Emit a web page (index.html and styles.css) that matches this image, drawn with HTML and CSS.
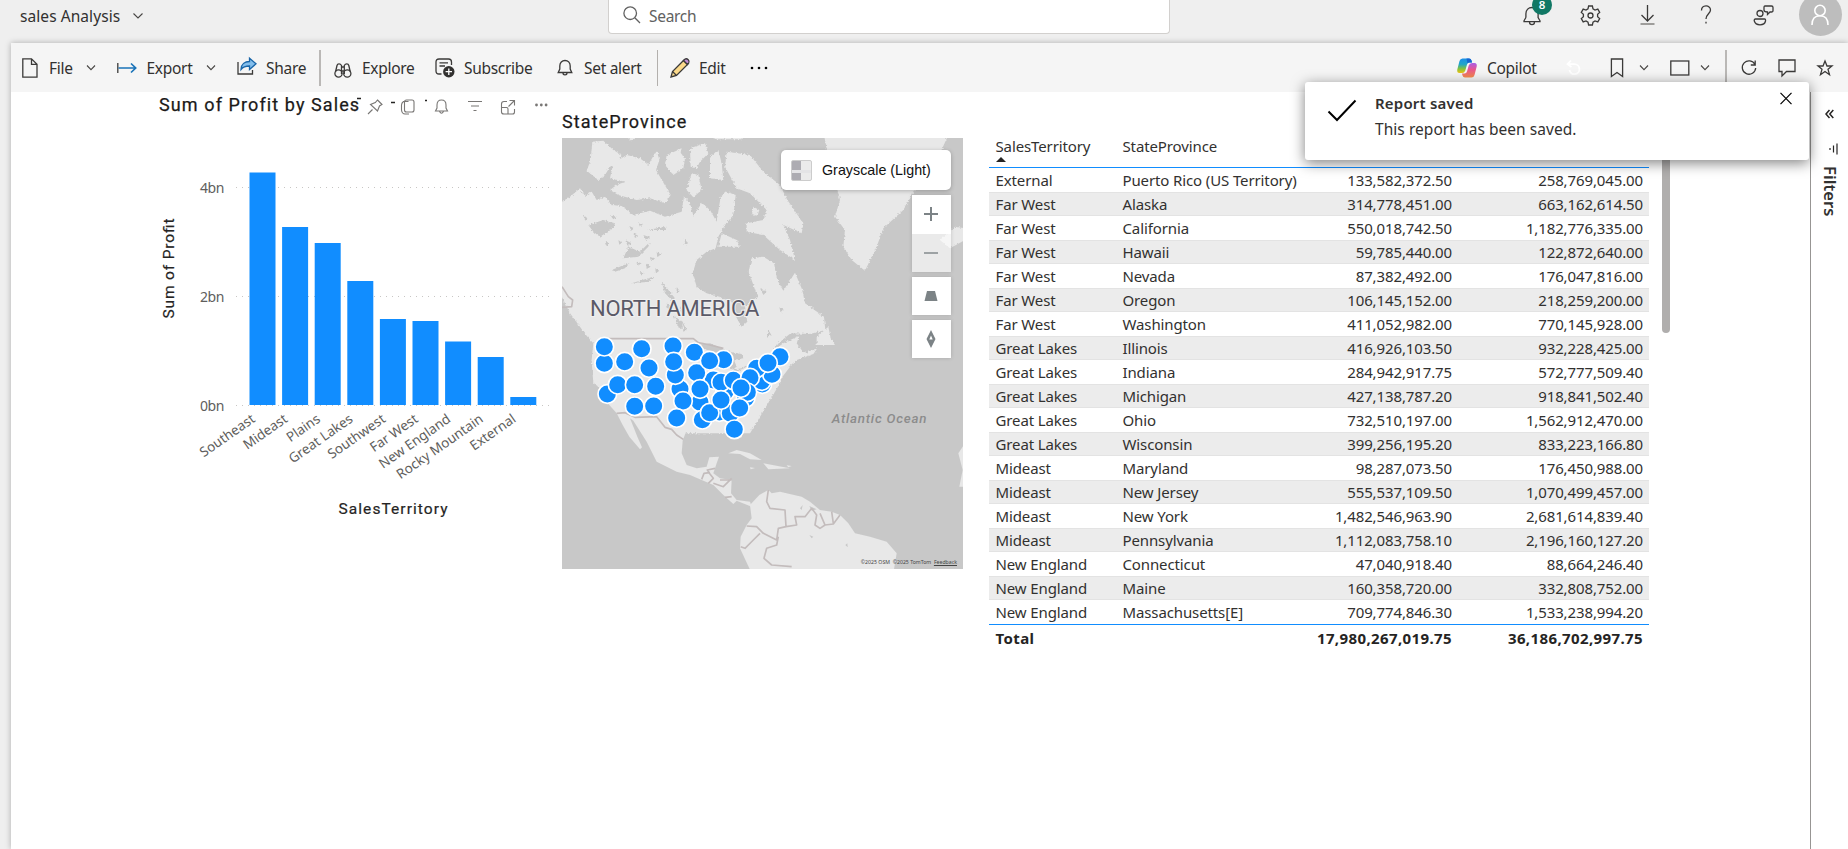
FILE: index.html
```
<!DOCTYPE html>
<html lang="en">
<head>
<meta charset="utf-8">
<title>sales Analysis</title>
<link rel="stylesheet" href="styles.css">
</head>
<body>
<header class="topbar">
  <span class="doc-name">sales Analysis</span>
  <svg class="chev" width="10" height="6" viewBox="0 0 10 6"><path d="M.5 .5 5 5 9.500 .5"/></svg>
  <div class="search">
    <svg class="line" width="18" height="18" viewBox="0 0 18 18"><circle cx="7.200" cy="7.200" r="6.300"/><path d="M11.800 11.800 17 17"/></svg>
    <span>Search</span>
  </div>
  <span></span>
  <div class="bell-wrap">
    <svg class="line" width="20" height="22" viewBox="0 0 20 22"><path d="M3.900 13.500V9.800C3.900 6 6.500 3.500 10 3.500S16.100 6 16.100 9.800V13.500L18 16.800V17.700H2V16.800L3.900 13.500M7.500 18C7.500 21.500 12.500 21.500 12.500 18"/></svg>
    <b class="badge">8</b>
  </div>
  <svg class="line" width="21" height="21" viewBox="0 0 21 21"><path d="M8.600 1H12.400L13 3.800 15 5 17.800 4.100 19.700 7.400 17.600 9.300V11.700L19.700 13.600 17.800 16.900 15 16 13 17.200 12.400 20H8.600L8 17.200 6 16 3.200 16.900 1.300 13.600 3.400 11.700V9.300L1.300 7.400 3.200 4.100 6 5 8 3.800Z"/><circle cx="10.500" cy="10.500" r="2.500"/></svg>
  <svg class="line" width="15" height="20" viewBox="0 0 15 20"><path d="M7.500 0V16M1.500 10 7.500 16 13.500 10"/><path class="soft" d="M.5 19H14.500"/></svg>
  <svg class="line" width="12" height="20" viewBox="0 0 12 20"><path d="M1.500 5.500C1.500 -.5 10.500 -.5 10.500 5 10.500 8.500 6 9.300 6 14"/><path d="M6 16.800V18.600"/></svg>
  <svg class="line" width="21" height="21" viewBox="0 0 21 21"><circle cx="7" cy="8.500" r="3"/><path d="M2.500 14H11.500C12.500 14 12.700 15 12.500 16 12 18.500 10 19.800 7 19.800S2 18.500 1.300 16C1 15 1.500 14 2.500 14ZM12 1H18.500Q20 1 20 2.500V5.500Q20 7 18.500 7H17L14.500 9.500V7Q11 7 11 5V2.500Q11 1 12 1Z"/></svg>
  <div class="avatar"><svg width="20" height="22" viewBox="0 0 20 22"><circle cx="10" cy="6.500" r="5.200"/><path d="M2 21C2 14 6 11.800 10 11.800S18 14 18 21"/></svg></div>
</header>

<main class="sheet">
  <nav class="toolbar">
    <svg class="line" width="16" height="20" viewBox="0 0 16 20"><path d="M.8 .8H9.500L15 6.300V19.200H.8ZM9.500 .8V6.300H15"/></svg>
    <span>File</span>
    <svg class="chev" width="10" height="6" viewBox="0 0 10 6"><path d="M1 .5 5 4.700 9 .5"/></svg>
    <svg class="line" width="20" height="12" viewBox="0 0 20 12"><path d="M.8 1V11"/><path class="blue" d="M1.500 6H18.500M14 1.500 18.700 6 14 10.500"/></svg>
    <span>Export</span>
    <svg class="chev" width="10" height="6" viewBox="0 0 10 6"><path d="M1 .5 5 4.700 9 .5"/></svg>
    <svg class="line up" width="20" height="18" viewBox="0 0 20 18"><path d="M1 5V17H15.500V13"/><path class="arrow" d="M4 12.500C4 7 8 4.500 12.500 4.500V1.200L19 6.800 12.500 12.500V9C9 9 6 9.800 4 12.500Z"/></svg>
    <span>Share</span>
    <i class="sep thick"></i>
    <svg class="line down" width="18" height="16" viewBox="0 0 18 16"><circle cx="4.500" cy="11.500" r="3.600"/><circle cx="13.300" cy="11.500" r="3.600"/><path d="M1.500 10 3 3.500Q3.400 1.800 5 1.800T7.500 3.500V12M16.300 10 14.800 3.500Q14.400 1.800 12.800 1.800T10.300 3.500V12M7.500 5H10.300M7.500 9H10.300"/></svg>
    <span>Explore</span>
    <svg class="line" width="20" height="20" viewBox="0 0 20 20"><path d="M6.500 16H4Q1 16 1 13V4Q1 1 4 1H13.500Q16.500 1 16.500 4V7M4.500 4.800H13M4.500 8H10"/><circle class="solid" cx="13.800" cy="13.700" r="5.700"/><path class="plus" d="M13.800 10.500V16.900M10.600 13.700H17"/></svg>
    <span>Subscribe</span>
    <svg class="line" width="16" height="18" viewBox="0 0 16 18"><path d="M2.800 10V7C2.800 3.500 5 1.500 8 1.500S13.200 3.500 13.200 7V10L14.800 13.500H1.200ZM6 14C6 16.500 10 16.500 10 14"/></svg>
    <span>Set alert</span>
    <i class="sep"></i>
    <svg class="line" width="20" height="20" viewBox="0 0 20 20"><path class="pencil" d="M1 19 2.500 13.500 13.500 2.500 17.500 6.500 6.500 17.500Z"/><path class="rubber" d="M13.500 2.500 14.800 1.300Q16.500 0 18.200 1.800T18.700 5.200L17.500 6.500Z"/><path d="M2.500 13.500 6.500 17.500"/></svg>
    <span>Edit</span>
    <svg width="18" height="4" viewBox="0 0 18 4"><circle cx="2" cy="2" r="1.300"/><circle cx="9" cy="2" r="1.300"/><circle cx="16" cy="2" r="1.300"/></svg>
    <svg width="20" height="20" viewBox="0 0 20 20">
      <defs>
        <linearGradient id="ca" x1="0" y1="0" x2="0" y2="1"><stop offset="0" stop-color="#1a8fe8"/><stop offset=".4" stop-color="#1fa5c9"/><stop offset=".7" stop-color="#7fc241"/><stop offset="1" stop-color="#f0c310"/></linearGradient>
        <linearGradient id="cb" x1="0" y1="0" x2="0" y2="1"><stop offset="0" stop-color="#a85ee8"/><stop offset=".45" stop-color="#e8558f"/><stop offset="1" stop-color="#f78b4a"/></linearGradient>
      </defs>
      <path fill="url(#ca)" d="M5.500 .5H12Q14 .5 14.500 2.500L15 4.500H12.500Q10.500 4.500 10 6.500L8.300 12.500Q7.500 15 5 15H2.500Q-.3 15 .3 11.500L2.500 3Q3.200 .5 5.500 .5Z"/>
      <path fill="#1664d0" d="M9.500 .5H12Q14 .5 14.500 2.500L15 4.500H12.500Q11 4.500 10.500 5.500Z"/>
      <path fill="url(#cb)" d="M14.500 19.500H8Q6 19.500 5.500 17.500L5 15.500H7.500Q9.500 15.500 10 13.500L11.700 7.500Q12.500 5 15 5H17.500Q20.300 5 19.700 8.500L17.500 17Q16.800 19.500 14.500 19.500Z"/>
    </svg>
    <span>Copilot</span>
    <svg class="undo" width="16" height="16" viewBox="0 0 16 16"><path d="M5 .5 1.500 4.200 5.500 7M1.500 4.200H8.500A5 5 0 1 1 3.500 10"/></svg>
    <svg class="line" width="14" height="20" viewBox="0 0 14 20"><path d="M1.400 1H12.600V18.500L7 14.500 1.400 18.500Z"/></svg>
    <svg class="chev" width="10" height="6" viewBox="0 0 10 6"><path d="M1 .5 5 4.700 9 .5"/></svg>
    <svg class="line" width="20" height="16" viewBox="0 0 20 16"><rect x=".8" y="1" width="18" height="14"/></svg>
    <svg class="chev" width="10" height="6" viewBox="0 0 10 6"><path d="M1 .5 5 4.700 9 .5"/></svg>
    <i class="sep thick"></i>
    <svg class="line" width="16" height="16" viewBox="0 0 16 16"><path d="M14 4.500A6.700 6.700 0 1 0 14.700 8M14.200 .5V5H9.800"/></svg>
    <svg class="line" width="18" height="18" viewBox="0 0 18 18"><path d="M1 1H17V12.500H8.500L4 17V12.500H1Z"/></svg>
    <svg class="line" width="16" height="16" viewBox="0 0 16 16"><path d="M8 1 10 6H15L11 9.300 12.500 14.700 8 11.500 3.500 14.700 5 9.300 1 6H6Z"/></svg>
  </nav>

  <div class="content">
    <section class="chart">
      <div class="chart-head">
        <h2>Sum of Profit by Sales</h2>
        <svg width="190" height="20" viewBox="0 0 190 20">
          <path class="frag" d="M0 3.500H4M34 7.500H38M68 5.500H70"/>
          <g class="tools">
            <path transform="translate(5 0)" d="M6 19 10.500 14.500M15.500 5 20 9.500 17.500 11 15.500 16 8.500 9.500 13.300 7.500Z"/>
            <path d="M51.500 6.500H46.500Q44.500 8 44.500 10V15Q45 19 48 19H52M49.500 5H55Q57 5 57 7V15Q57 17 55 17H49.500Q47.500 17 47.500 15V7Q47.500 5 49.500 5Z"/>
            <path d="M80 13V10Q80 5 84.500 5T89 10V13L90.500 16H78.500ZM82.500 16.500Q84.500 20 86.500 16.500"/>
            <path d="M111 6.500H125M114 11H122M116.500 15.500H119.500"/>
            <path d="M150 6.500H147Q144.500 6.500 144.500 9V17Q144.500 19 147 19H155.500Q157.500 19 157.500 17V14M152.500 5.500H157.500V10.500M157 6 151.500 11.500M144.500 12.500H149.500Q151 12.500 151 14V19"/>
          </g>
          <g class="tool-dots"><circle cx="179.500" cy="10" r="1.400"/><circle cx="184.300" cy="10" r="1.400"/><circle cx="189.100" cy="10" r="1.400"/></g>
        </svg>
      </div>
      <svg class="plot" width="403" height="400" viewBox="159 125 403 400">
        <g class="grid"><path d="M236 187.500H550M236 296.500H550M236 405.500H550"/></g>
        <g class="ticks">
          <text x="200" y="192.500" textLength="24.500">4bn</text>
          <text x="200" y="301.500" textLength="24.500">2bn</text>
          <text x="200" y="410.500" textLength="24.500">0bn</text>
        </g>
        <g class="bars">
          <rect x="249.500" y="172.500" width="26" height="232.500"/>
          <rect x="282.100" y="227" width="26" height="178"/>
          <rect x="314.700" y="243" width="26" height="162"/>
          <rect x="347.300" y="281" width="26" height="124"/>
          <rect x="379.900" y="319" width="26" height="86"/>
          <rect x="412.500" y="321" width="26" height="84"/>
          <rect x="445.100" y="341.500" width="26" height="63.500"/>
          <rect x="477.700" y="357" width="26" height="48"/>
          <rect x="510.300" y="397" width="26" height="8"/>
        </g>
        <g class="cats">
          <text transform="translate(256 421) rotate(-35)">Southeast</text>
          <text transform="translate(288.600 421) rotate(-35)">Mideast</text>
          <text transform="translate(321.200 421) rotate(-35)">Plains</text>
          <text transform="translate(353.800 421) rotate(-35)">Great Lakes</text>
          <text transform="translate(386.400 421) rotate(-35)">Southwest</text>
          <text transform="translate(419 421) rotate(-35)">Far West</text>
          <text transform="translate(451.600 421) rotate(-35)">New England</text>
          <text transform="translate(484.200 421) rotate(-35)">Rocky Mountain</text>
          <text transform="translate(516.800 421) rotate(-35)">External</text>
        </g>
        <g class="axis">
          <text x="338.500" y="514" textLength="109">SalesTerritory</text>
          <text transform="translate(174 318.500) rotate(-90)" textLength="100">Sum of Profit</text>
        </g>
      </svg>
    </section>

    <section class="map-card">
      <h2>StateProvince</h2>
      <div class="map">
        <svg width="401" height="431" viewBox="36 114 1203 1293">
          <defs><filter id="coast" x="-5%" y="-5%" width="110%" height="110%"><feTurbulence type="fractalNoise" baseFrequency=".16" numOctaves="3" seed="4"/><feDisplacementMap in="SourceGraphic" scale="10" xChannelSelector="R" yChannelSelector="G"/></filter>
          <filter id="coast-soft" x="-5%" y="-5%" width="110%" height="110%"><feTurbulence type="fractalNoise" baseFrequency=".15" numOctaves="2" seed="9"/><feDisplacementMap in="SourceGraphic" scale="4" xChannelSelector="R" yChannelSelector="G"/></filter></defs>
          <g class="land" filter="url(#coast)">
            <path d="M20 315 60 290 90 265 105 288 125 275 140 300 165 290 185 315 215 318 250 345 300 332 345 350 395 335 402 290 420 310 430 350 455 308 480 330 500 365 512 290 530 275 557 285 550 345 525 375 505 410 497 445 470 455 440 480 428 520 440 560 470 580 510 592 545 605 552 640 575 680 592 665 585 620 622 590 612 560 596 515 605 475 640 470 672 490 682 540 700 572 735 518 757 570 765 610 822 650 826 690 780 702 722 700 690 725 665 755 700 730 748 707 740 730 762 760 802 745 790 762 740 780 720 797 700 812 690 850 600 1000 360 1000 130 850 125 780 130 730 108 705 60 640 20 560Z"/>
            <path d="M127 125 160 122 190 150 215 165 205 190 180 200 165 225 145 240 110 212 122 180Z"/>
            <path d="M190 190 230 165 270 175 295 195 320 150 328 180 318 210 362 285 345 310 300 295 260 300 205 285 180 270 200 255 225 245 180 235Z"/>
            <path d="M350 165 385 150 405 175 400 205 370 225 345 195Z"/>
            <path d="M420 145 465 130 475 160 450 185 440 205 422 200Z"/>
            <path d="M425 220 445 225 455 270 430 292 410 270Z"/>
            <path d="M480 170 505 150 515 190 520 240 480 235Z"/>
            <path d="M530 155 600 165 640 215 690 255 712 300 760 370 755 400 700 375 720 420 735 480 690 450 640 405 590 395 590 370 640 360 650 330 600 280 560 265 525 200Z"/>
            <path d="M610 320 628 330 622 348 606 342Z"/>
            <path d="M515 400 560 420 570 440 505 440Z"/>
            <path d="M470 108H575V118H500ZM380 150 395 145 390 165ZM230 110H262L245 124Z"/>
            <path d="M822 105 1195 105 1170 160 1120 200 1100 260 1060 330 1000 385 980 440 945 512 905 480 880 440 885 390 855 350 870 300 860 260 835 170Z"/>
            <path d="M1170 420 1215 380 1245 385V420L1200 445Z"/>
            <path d="M800 712 835 680 842 715 855 735 800 735Z"/>
          </g>
          <g class="water" filter="url(#coast)">
            <path d="M115 375 160 360 195 370 190 385 150 410 130 395ZM180 345 200 350 190 358ZM235 440 270 455 300 425 295 440 265 470 220 475ZM185 510 235 490 225 505 195 515ZM290 390 350 380 345 390ZM245 550 310 530 300 545ZM335 545 355 570 375 595 365 600 345 580ZM370 645 385 680 405 690 395 665ZM395 660 410 690 400 695ZM575 640 590 660 580 678 565 660ZM630 565 650 575 640 585ZM98 343 112 355 106 362ZM250 400 266 408 255 414ZM320 455 334 462 322 472ZM288 488 302 500 290 507ZM655 690 664 705 650 710ZM238 378 252 385 244 392ZM390 622 402 635 395 642ZM688 622 702 630 692 638Z"/>
            <path d="M225 420 245 430 235 440ZM300 470 315 475 305 485ZM205 420 216 428 208 434ZM265 368 280 372 270 380ZM315 505 328 512 318 520ZM350 610 364 622 354 628ZM405 415 414 430 404 436ZM165 425 180 430 170 438ZM270 515 284 520 272 527ZM380 560 390 575 380 580ZM280 405 300 412 288 420ZM260 485 275 490 262 498Z"/>
            <path d="M440 735 480 730 505 740 540 755 575 762 580 775 552 780 560 800 545 810 530 785 505 775 480 752 455 745Z"/>
            <path d="M545 810 575 805 600 790 590 800 560 815Z"/>
          </g>
          <g class="land" filter="url(#coast-soft)">
            <path d="M125 780 132 820 160 895 200 940 218 975 238 1010 270 1048 276 1042 262 1010 240 955 250 962 290 1025 305 1055 320 1085 380 1115 420 1125 455 1140 490 1155 520 1185 550 1212 560 1202 605 1220 600 1205 560 1200 543 1180 545 1140 510 1135 490 1120 500 1090 507 1070 478 1072 470 1100 440 1105 410 1095 395 1060 398 1022 410 990 455 985 480 965 530 965 545 990 560 1018 575 1012 580 980 575 955 600 930 640 890 660 870 690 840 720 800 600 820 540 870 300 830 150 760Z"/>
            <path d="M600 1215 628 1185 655 1170 665 1180 690 1175 755 1190 780 1205 810 1230 845 1235 870 1245 895 1270 915 1300 960 1310 1010 1325 1040 1360 1030 1420 605 1420 570 1345 572 1310 590 1275 605 1255Z"/>
            <path d="M535 1060 560 1050 600 1060 635 1080 600 1078 570 1062ZM640 1090 695 1100 720 1105 655 1108ZM600 1102 615 1104 602 1108ZM710 1096 725 1098 715 1102Z"/>
            <path d="M1225 1060 1245 1030V1160H1228L1238 1110Z"/>
          </g>
          <g class="water"><path d="M750 1225 758 1215 755 1230ZM778 1305 790 1310 785 1315ZM886 1335 892 1330 893 1342ZM778 1218 800 1228 785 1232Z"/></g>
          <g class="borders">
            <path d="M165 716H430L445 728 480 735 520 745M36 560 55 590 68 600 65 620 36 622M200 940 225 938 255 952 320 950 345 982 365 988 380 1005 400 1018M455 1138 462 1120 478 1118 472 1110 495 1105M478 1120 490 1135 475 1150M510 1140 545 1140M490 1150 520 1160 545 1135M525 1192 545 1190"/>
            <path d="M655 1170 650 1205 660 1225 705 1230 708 1280 685 1285 680 1320 640 1300 620 1280 590 1278M630 1300 610 1320 585 1345 572 1340M708 1280 740 1275 735 1250 765 1250 785 1225M785 1225 800 1245 795 1275 810 1285 825 1275 850 1272 870 1245M810 1240 825 1275M845 1235 850 1270M685 1310 680 1335 650 1345 642 1375 665 1395 725 1400"/>
          </g>
          <g class="labels">
            <text class="continent" x="120" y="647" textLength="508">NORTH AMERICA</text>
            <text class="ocean" x="845" y="968" textLength="284">Atlantic Ocean</text>
          </g>
          <g class="dots" transform="translate(0 630)">
            <circle cx="163" cy="160" r="28"/><circle cx="163" cy="110" r="28"/><circle cx="224" cy="155" r="28"/><circle cx="275" cy="116" r="28"/><circle cx="297" cy="174" r="28"/><circle cx="172" cy="252" r="28"/><circle cx="203" cy="224" r="28"/><circle cx="317" cy="229" r="28"/><circle cx="254" cy="224" r="28"/><circle cx="254" cy="289" r="28"/><circle cx="311" cy="288" r="28"/><circle cx="369" cy="108" r="28"/><circle cx="390" cy="237" r="28"/><circle cx="376" cy="195" r="28"/><circle cx="371" cy="155" r="28"/><circle cx="433" cy="127" r="28"/><circle cx="490" cy="210" r="28"/><circle cx="440" cy="188" r="28"/><circle cx="450" cy="277" r="28"/><circle cx="399" cy="273" r="28"/><circle cx="380" cy="324" r="28"/><circle cx="457" cy="329" r="28"/><circle cx="450" cy="237" r="28"/><circle cx="521" cy="149" r="28"/><circle cx="479" cy="152" r="28"/><circle cx="525" cy="245" r="28"/><circle cx="513" cy="217" r="28"/><circle cx="637" cy="222" r="28"/><circle cx="635" cy="213" r="28"/><circle cx="690" cy="140" r="28"/><circle cx="666" cy="193" r="28"/><circle cx="620" cy="175" r="28"/><circle cx="654" cy="159" r="28"/><circle cx="550" cy="211" r="28"/><circle cx="600" cy="203" r="28"/><circle cx="587" cy="264" r="28"/><circle cx="592" cy="247" r="28"/><circle cx="573" cy="234" r="28"/><circle cx="508" cy="306" r="28"/><circle cx="479" cy="308" r="28"/><circle cx="541" cy="310" r="28"/><circle cx="569" cy="294" r="28"/><circle cx="513" cy="270" r="28"/><circle cx="553" cy="358" r="28"/>
          </g>
        </svg>
        <div class="style-btn"><i class="swatch"></i><span>Grayscale (Light)</span></div>
        <div class="map-ctl">
          <div class="zoomers">
            <b><svg width="14" height="14" viewBox="0 0 14 14"><path d="M0 6H6V0H8V6H14V8H8V14H6V8H0Z"/></svg></b>
            <b class="off"><svg width="14" height="14" viewBox="0 0 14 14"><path d="M0 6H14V8H0Z"/></svg></b>
          </div>
          <b><svg width="14" height="14" viewBox="0 0 14 14"><path d="M3 2H11L13.500 12H.5Z"/></svg></b>
          <b><svg width="14" height="18" viewBox="0 0 14 18"><path fill-rule="evenodd" d="M7 0 11.500 9 7 18 2.500 9ZM7 5.500 5.300 9.500H8.700Z"/></svg></b>
        </div>
        <div class="credit">©2025 OSM&nbsp; ©2025 TomTom&nbsp; <u>Feedback</u></div>
      </div>
    </section>

    <section class="table-card">
      <div class="tr th"><span>SalesTerritory<i class="tri"></i></span><span>StateProvince</span></div>
      <div class="rows" id="rows"></div>
      <div class="tr total"><span>Total</span><span></span><span class="n">17,980,267,019.75</span><span class="n">36,186,702,997.75</span></div>
    </section>
    <div class="scroll"></div>

    <aside class="filters">
      <svg width="9" height="10" viewBox="0 0 9 10"><path d="M4.500 1 1 5 4.500 9M8.300 1 4.800 5 8.300 9"/></svg>
      <svg class="bars-ico" width="9" height="12" viewBox="0 0 9 12"><path d="M1 5V7M4.500 2.500V9.500M8 .5V11.500"/></svg>
      <span>Filters</span>
    </aside>
  </div>
</main>

<div class="toast">
  <svg width="30" height="23" viewBox="0 0 30 23"><path d="M1.500 12.500 10 21 28.500 1.500"/></svg>
  <div><strong>Report saved</strong><p>This report has been saved.</p></div>
  <svg class="x" width="12" height="13" viewBox="0 0 12 13"><path d="M.5 .8 11.500 12.200M11.500 .8 .5 12.200"/></svg>
</div>
<script src="rows.js"></script>
</body>
</html>
```
FILE: rows.js
```
const data = [
  ["External", "Puerto Rico (US Territory)", "133,582,372.50", "258,769,045.00"],
  ["Far West", "Alaska", "314,778,451.00", "663,162,614.50"],
  ["Far West", "California", "550,018,742.50", "1,182,776,335.00"],
  ["Far West", "Hawaii", "59,785,440.00", "122,872,640.00"],
  ["Far West", "Nevada", "87,382,492.00", "176,047,816.00"],
  ["Far West", "Oregon", "106,145,152.00", "218,259,200.00"],
  ["Far West", "Washington", "411,052,982.00", "770,145,928.00"],
  ["Great Lakes", "Illinois", "416,926,103.50", "932,228,425.00"],
  ["Great Lakes", "Indiana", "284,942,917.75", "572,777,509.40"],
  ["Great Lakes", "Michigan", "427,138,787.20", "918,841,502.40"],
  ["Great Lakes", "Ohio", "732,510,197.00", "1,562,912,470.00"],
  ["Great Lakes", "Wisconsin", "399,256,195.20", "833,223,166.80"],
  ["Mideast", "Maryland", "98,287,073.50", "176,450,988.00"],
  ["Mideast", "New Jersey", "555,537,109.50", "1,070,499,457.00"],
  ["Mideast", "New York", "1,482,546,963.90", "2,681,614,839.40"],
  ["Mideast", "Pennsylvania", "1,112,083,758.10", "2,196,160,127.20"],
  ["New England", "Connecticut", "47,040,918.40", "88,664,246.40"],
  ["New England", "Maine", "160,358,720.00", "332,808,752.00"],
  ["New England", "Massachusetts[E]", "709,774,846.30", "1,533,238,994.20"]
];
document.getElementById("rows").innerHTML = data.map(r =>
  `<div class="tr"><span>${r[0]}</span><span>${r[1]}</span><span class="n">${r[2]}</span><span class="n">${r[3]}</span></div>`
).join("");
```
FILE: styles.css
```
* { box-sizing: border-box; }
body {
  margin: 0; width: 1848px; height: 849px; overflow: hidden; position: relative;
  background: #efefef; color: #323130;
  font: 15px/20px "Noto Sans", "Open Sans", sans-serif;
}
svg { display: block; overflow: visible; }
h2, p { margin: 0; }

.line { fill: none; stroke: #3b3a39; stroke-width: 1.3; }
.line .soft { stroke: #8a8886; stroke-width: 1.6; }
.line .blue { stroke: #1a73b8; stroke-width: 1.7; }
.line .arrow { fill: #83beec; stroke: #1a66a8; }
.line .solid { fill: #323130; stroke: none; }
.line .plus { stroke: #fff; }
.line .pencil { fill: #fbd98a; }
.line .rubber { fill: #c38cd4; }
.chev { fill: none; stroke: #484644; stroke-width: 1.1; }

.topbar {
  display: grid; height: 43px; padding-left: 20px; align-items: center;
  grid-template-columns: 113px 475px 562px 352px 58px 60px 60px 53px 45.500px 43px;
  grid-template-rows: 29px;
}
.doc-name { font-size: 15.500px; letter-spacing: .07px; white-space: nowrap; padding-top: 2px; }
.topbar > .chev { margin-top: 2px; }
.topbar > svg.line { margin-top: 1px; }
.search {
  display: flex; align-items: center; gap: 8px; height: 34px; padding: 1px 0 5px 14px; align-self: start;
  background: #fff; border: 1px solid #d2d0ce; border-top: 0; border-radius: 0 0 4px 4px;
  color: #616161; font-size: 15.500px; letter-spacing: -.3px;
}
.search svg { stroke: #616161; }
.search span { margin-top: 2px; }
.bell-wrap { position: relative; }
.badge {
  position: absolute; left: 10px; top: -9px; width: 20px; height: 20px; border-radius: 50%;
  background: #117865; color: #fff; font-size: 11.500px; line-height: 19px; text-align: center; font-weight: 600;
}
.avatar {
  width: 43px; height: 43px; border-radius: 50%; background: #bdbdbd;
  display: flex; align-items: center; justify-content: center;
}
.avatar svg { fill: none; stroke: #fff; stroke-width: 1.6; }

.sheet {
  margin-left: 11px; height: 806px; background: #fff;
  box-shadow: 0 0 6px rgba(0, 0, 0, .28);
}
.toolbar {
  display: grid; height: 49px; padding-left: 11px; align-items: center; background: #f5f5f5;
  grid-template-columns: 27px 37px 31px 29.5px 59.5px 31px 29px 53px 15px 28px 73px 29px 93px 27px 73px 13px 29px 51px 707px 30px 79px 44px 28.5px 31px 30.5px 25px 15.5px 37.5px 39px 16px;
  font-size: 15.500px; letter-spacing: -.3px; white-space: nowrap;
}
.up { margin-top: -4px; }
.down { margin-top: 4px; }
.sep { width: 1px; height: 36px; background: #b3b0ad; }
.sep.thick { width: 2px; background: #bab8b6; }
.undo { fill: none; stroke: #fff; stroke-width: 1.8; }

.content { display: flex; height: 757px; padding-left: 148px; }

h2 { font: 400 18px/24px Roboto, sans-serif; letter-spacing: 1.1px; white-space: nowrap; color: #1b1a19; -webkit-text-stroke: .25px #1b1a19; }
.chart { width: 403px; flex: none; }
.chart-head { display: flex; height: 33px; padding-top: 1px; }
.chart-head h2 { width: 198px; flex: none; }
.frag { stroke: #252423; stroke-width: 1.5; }
.chart-head svg { margin-top: 2px; }
.tools { fill: none; stroke: #797775; stroke-width: 1.1; }
.tool-dots { fill: #797775; }
.grid { stroke: #c8c6c4; stroke-width: 1; stroke-dasharray: 1 5; }
.ticks, .cats { font-size: 14px; fill: #605e5c; }
.cats { text-anchor: end; font-size: 13.500px; }
.bars { fill: #118dff; }
.axis { font: 400 15.500px Roboto, sans-serif; fill: #252423; stroke: #252423; stroke-width: .2; }

.map-card { width: 401px; flex: none; padding-top: 18px; }
.map-card h2 { height: 28px; }
.map { position: relative; width: 401px; height: 431px; overflow: hidden; background: #c8c8c8; }
.land { fill: #e8e8e8; }
.water { fill: #c8c8c8; }
.borders { fill: none; stroke: #c3bcbc; stroke-width: 5; stroke-linejoin: round; }
.continent { font: 66px Roboto, sans-serif; fill: #5b5a68; stroke: #f0f0f0; stroke-width: 6; paint-order: stroke; }
.ocean { font: italic 500 40px Roboto, sans-serif; fill: #8c8c8c; }
.dots { fill: #118dff; stroke: #fff; stroke-width: 5; }
.style-btn {
  position: absolute; left: 219px; top: 12px; width: 170px; height: 40px; border-radius: 5px; background: #fff;
  display: flex; align-items: center; gap: 10px; padding-left: 10px; box-shadow: 0 1px 4px rgba(0, 0, 0, .25);
  font: 14.300px "Liberation Sans", Arial, sans-serif; color: #111; white-space: nowrap;
}
.swatch { width: 21px; height: 21px; border: 1px solid #ccc; border-radius: 2px; background: linear-gradient(#e4e4e6, #e4e4e6) 0 9px / 100% 3px no-repeat, linear-gradient(90deg, #adacb2 45%, #ebebeb 45%); }
.map-ctl { position: absolute; right: 12px; top: 57px; display: grid; gap: 5px; }
.map-ctl b { width: 39px; height: 38px; background: #fff; display: flex; align-items: center; justify-content: center; }
.map-ctl svg { fill: #7c8386; margin-right: 1px; }
.map-ctl > * { box-shadow: 0 0 4px rgba(0, 0, 0, .16); }
.map-ctl .zoomers b { height: 39px; padding-bottom: 1px; }
.map-ctl .zoomers .off { background: rgba(255, 255, 255, .62); height: 38px; }
.off svg { opacity: .7; }
.credit { position: absolute; right: 6px; bottom: 2px; font: 5.200px/9px "Noto Sans", sans-serif; color: #444; white-space: nowrap; }

.table-card { margin-left: 26px; width: 660px; flex: none; letter-spacing: -.12px; }
.tr { display: grid; grid-template-columns: 127px 192px 150px 1fr; height: 24px; padding: 0 6px 0 6.500px; line-height: 25px; white-space: nowrap; }
.tr .n { text-align: right; padding-right: 12.500px; }
.tr .n:last-child { padding-right: 0; }
.th { height: 76px; padding-top: 42px; border-bottom: 1px solid #118dff; }
.tri { display: block; width: 0; border: 5px solid transparent; border-top: 0; border-bottom-color: #252423; margin-top: -2px; }
.rows .tr:nth-child(even) { background: #ececec; border-top: 1px solid #e3e3e3; border-bottom: 1px solid #e3e3e3; line-height: 23px; }
.rows { height: 456px; }
.total { border-top: 1px solid #118dff; font-weight: 700; height: 30px; line-height: 27px; letter-spacing: .38px; color: #252423; }
.scroll { width: 8px; height: 241px; margin-left: 13px; background: #b0aead; border-radius: 0 0 4px 4px; }

.filters {
  margin-left: auto; flex: none; width: 38px; height: 757px; padding-top: 17px;
  display: flex; flex-direction: column; align-items: center; border-left: 1px solid #979593;
}
.filters svg { fill: none; stroke: #252423; stroke-width: 1.5; }
.filters .bars-ico { margin: 24px 0 0 7px; stroke-width: 1.2; }
.filters span { writing-mode: vertical-rl; font-weight: 600; font-size: 16.500px; letter-spacing: .1px; margin-top: 11px; line-height: 20px; }

.toast {
  position: absolute; left: 1305px; top: 82px; width: 504px; height: 78px; border-radius: 3px; background: #fff;
  display: flex; padding: 11px 17px 0 22px; box-shadow: 0 3px 14px rgba(0, 0, 0, .5); color: #323130;
}
.toast svg { fill: none; stroke: #000; stroke-width: 2; margin-top: 6px; }
.toast > div { margin-left: 18px; flex: 1; line-height: 20px; }
.toast strong { display: block; font-weight: 600; letter-spacing: .2px; }
.toast p { margin-top: 6px; font-size: 15.500px; letter-spacing: .05px; }
.toast .x { stroke-width: 1.2; margin-top: -1px; }
```
